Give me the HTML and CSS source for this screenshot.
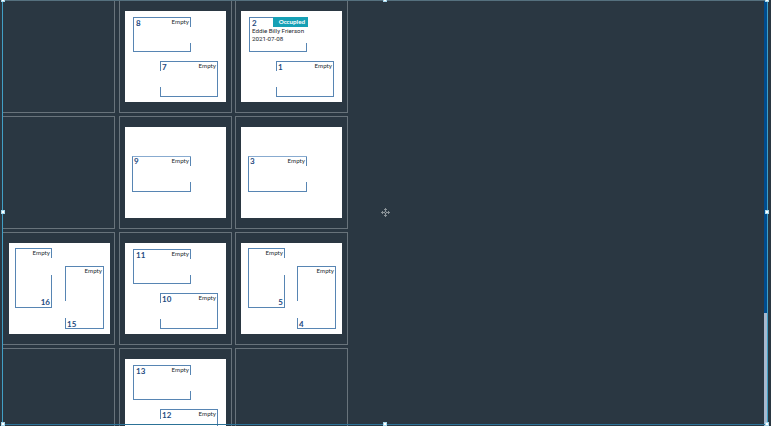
FILE: index.html
```html
<!DOCTYPE html>
<html lang="en">
<head>
<meta charset="utf-8">
<title>Ward map</title>
<link rel="stylesheet" href="styles.css">
</head>
<body>
<main class="canvas">
  <section class="ward">
    <div class="cell"></div>
    <div class="cell"><div class="room">
      <div class="bed door-right"><b>8</b><span>Empty</span></div>
      <div class="bed second door-left"><b>7</b><span>Empty</span></div>
    </div></div>
    <div class="cell"><div class="room">
      <div class="bed occupied door-right"><b>2</b><span class="tag">Occupied</span><p>Eddie Billy Frierson<br>2021-07-08</p></div>
      <div class="bed second door-left"><b>1</b><span>Empty</span></div>
    </div></div>
    <div class="cell"></div>
    <div class="cell"><div class="room">
      <div class="bed single door-right"><b>9</b><span>Empty</span></div>
    </div></div>
    <div class="cell"><div class="room">
      <div class="bed single door-right"><b>3</b><span>Empty</span></div>
    </div></div>
    <div class="cell first"><div class="room upright">
      <div class="bed tall door-right"><span>Empty</span><b>16</b></div>
      <div class="bed tall low door-left"><span>Empty</span><b>15</b></div>
    </div></div>
    <div class="cell"><div class="room">
      <div class="bed door-right"><b>11</b><span>Empty</span></div>
      <div class="bed second door-left"><b>10</b><span>Empty</span></div>
    </div></div>
    <div class="cell"><div class="room upright shifted">
      <div class="bed tall door-right"><span>Empty</span><b>5</b></div>
      <div class="bed tall low door-left"><span>Empty</span><b>4</b></div>
    </div></div>
    <div class="cell"></div>
    <div class="cell"><div class="room">
      <div class="bed door-right"><b>13</b><span>Empty</span></div>
      <div class="bed second door-left"><b>12</b><span>Empty</span></div>
    </div></div>
    <div class="cell"></div>
  </section>
  <div class="scrollbar"><div class="thumb"></div></div>
  <div class="selection">
    <i class="handle tl"></i><i class="handle tc"></i><i class="handle tr"></i>
    <i class="handle ml"></i><i class="handle mr"></i>
    <i class="handle bl"></i><i class="handle bc"></i><i class="handle br"></i>
    <svg class="move" viewBox="0 0 9 9" width="9" height="9">
      <path d="M4.5 .5v8M.5 4.5h8M3 2l1.5-1.5L6 2M3 7l1.5 1.5L6 7M2 3 .5 4.5 2 6M7 3l1.5 1.5L7 6"/>
      <circle cx="4.5" cy="4.5" r="1"/>
    </svg>
  </div>
</main>
</body>
</html>
```
FILE: styles.css
```css
* { box-sizing: border-box; }
body { margin: 0; background: #2a3742; }
.canvas {
  position: relative;
  display: flex;
  justify-content: space-between;
  width: 771px;
  height: 426px;
  padding: 0 3px 0 2px;
  overflow: hidden;
  background: #2a3742;
  font-family: Lato, sans-serif;
}
.ward {
  display: grid;
  grid-template-columns: 117px 116px 113px;
  grid-auto-rows: 113px;
  row-gap: 3px;
  height: 426px;
}
.cell {
  width: 113px;
  height: 113px;
  padding: 10px 5px;
  border: 1px solid #68737b;
}
.cell.first { padding-left: 6px; }
.room {
  width: 101px;
  height: 91px;
  padding: 6px 0 0 8px;
  background: #fff;
}
.bed {
  --line: #5785b3;
  display: flex;
  justify-content: space-between;
  align-items: flex-start;
  width: 58px;
  height: 35px;
  border: 1px solid var(--line);
  color: #1d4a80;
}
.bed b {
  margin: 1px 0 0 2px;
  font-size: 8px;
  line-height: 8px;
  font-weight: 700;
}
.bed span {
  margin: 0 1px 0 0;
  color: #24282e;
  font: 6.2px/7px Lato, sans-serif;
}
.second { margin: 9px 0 0 27px; height: 36px; }
.second b { margin-left: 1px; }
.single { margin: 23px 0 0 -1px; width: 59px; height: 36px; border-top-color: #88abd0; }
.single b { margin: 0 0 0 1px; }
.door-right {
  border-right: 0;
  padding-right: 1px;
  background: linear-gradient(var(--line) 9px, transparent 9px 25px, var(--line) 25px) right / 1px 100% no-repeat;
}
.door-left {
  border-left: 0;
  padding-left: 1px;
  background: linear-gradient(var(--line) 9px, transparent 9px 25px, var(--line) 25px) left / 1px 100% no-repeat;
}
.occupied { flex-wrap: wrap; align-content: flex-start; padding-right: 0; }
.occupied .tag {
  width: 35px;
  height: 10px;
  margin: -1px -1px 0 0;
  padding-right: 3px;
  background: #16a0b5;
  color: #fff;
  font: 700 6.2px/10px Lato, sans-serif;
  text-align: right;
}
.occupied p {
  margin: 1px -4px 0 2px;
  color: #24282e;
  font: 6.2px/7.5px Roboto, sans-serif;
  white-space: nowrap;
}
.upright { display: flex; padding: 5px 0 0 6px; }
.upright.shifted { padding-left: 7px; }
.tall {
  flex-direction: column;
  width: 37px;
  height: 60px;
}
.tall span { align-self: flex-end; }
.tall b { align-self: flex-end; margin: 0 1px 1px 0; }
.tall.door-right {
  background-image: linear-gradient(var(--line) 9px, transparent 9px 26px, var(--line) 26px);
}
.tall.low {
  width: 39px;
  height: 63px;
  margin: 18px 0 0 13px;
  background-image: linear-gradient(var(--line) 34px, transparent 34px 51px, var(--line) 51px);
}
.shifted .tall.low { margin-left: 12px; }
.tall.low b { align-self: flex-start; margin: 0 0 0 1px; }
.scrollbar { width: 4px; height: 426px; background: #004b8d; }
.thumb { height: 113px; margin-top: 313px; background: #a7b8ce; }
.selection {
  position: absolute;
  inset: 0 3px 1px 2px;
  border: 1px solid #419fc5;
  border-top-color: #55707e;
  border-bottom-color: #2c7297;
}
.handle {
  position: absolute;
  width: 4px;
  height: 4px;
  background: #fff;
  border: 1px solid #a8d9ed;
}
.tl, .tc, .tr { top: -3px; }
.ml, .mr { top: 209px; }
.bl, .bc, .br { bottom: -2px; }
.tl, .ml, .bl { left: -2px; }
.tc, .bc { left: 380px; }
.tr, .mr, .br { right: -2px; }
.move {
  position: absolute;
  left: 378px;
  top: 207px;
  fill: #2a3742;
  stroke: #a4abaf;
  stroke-width: .8;
}
```
